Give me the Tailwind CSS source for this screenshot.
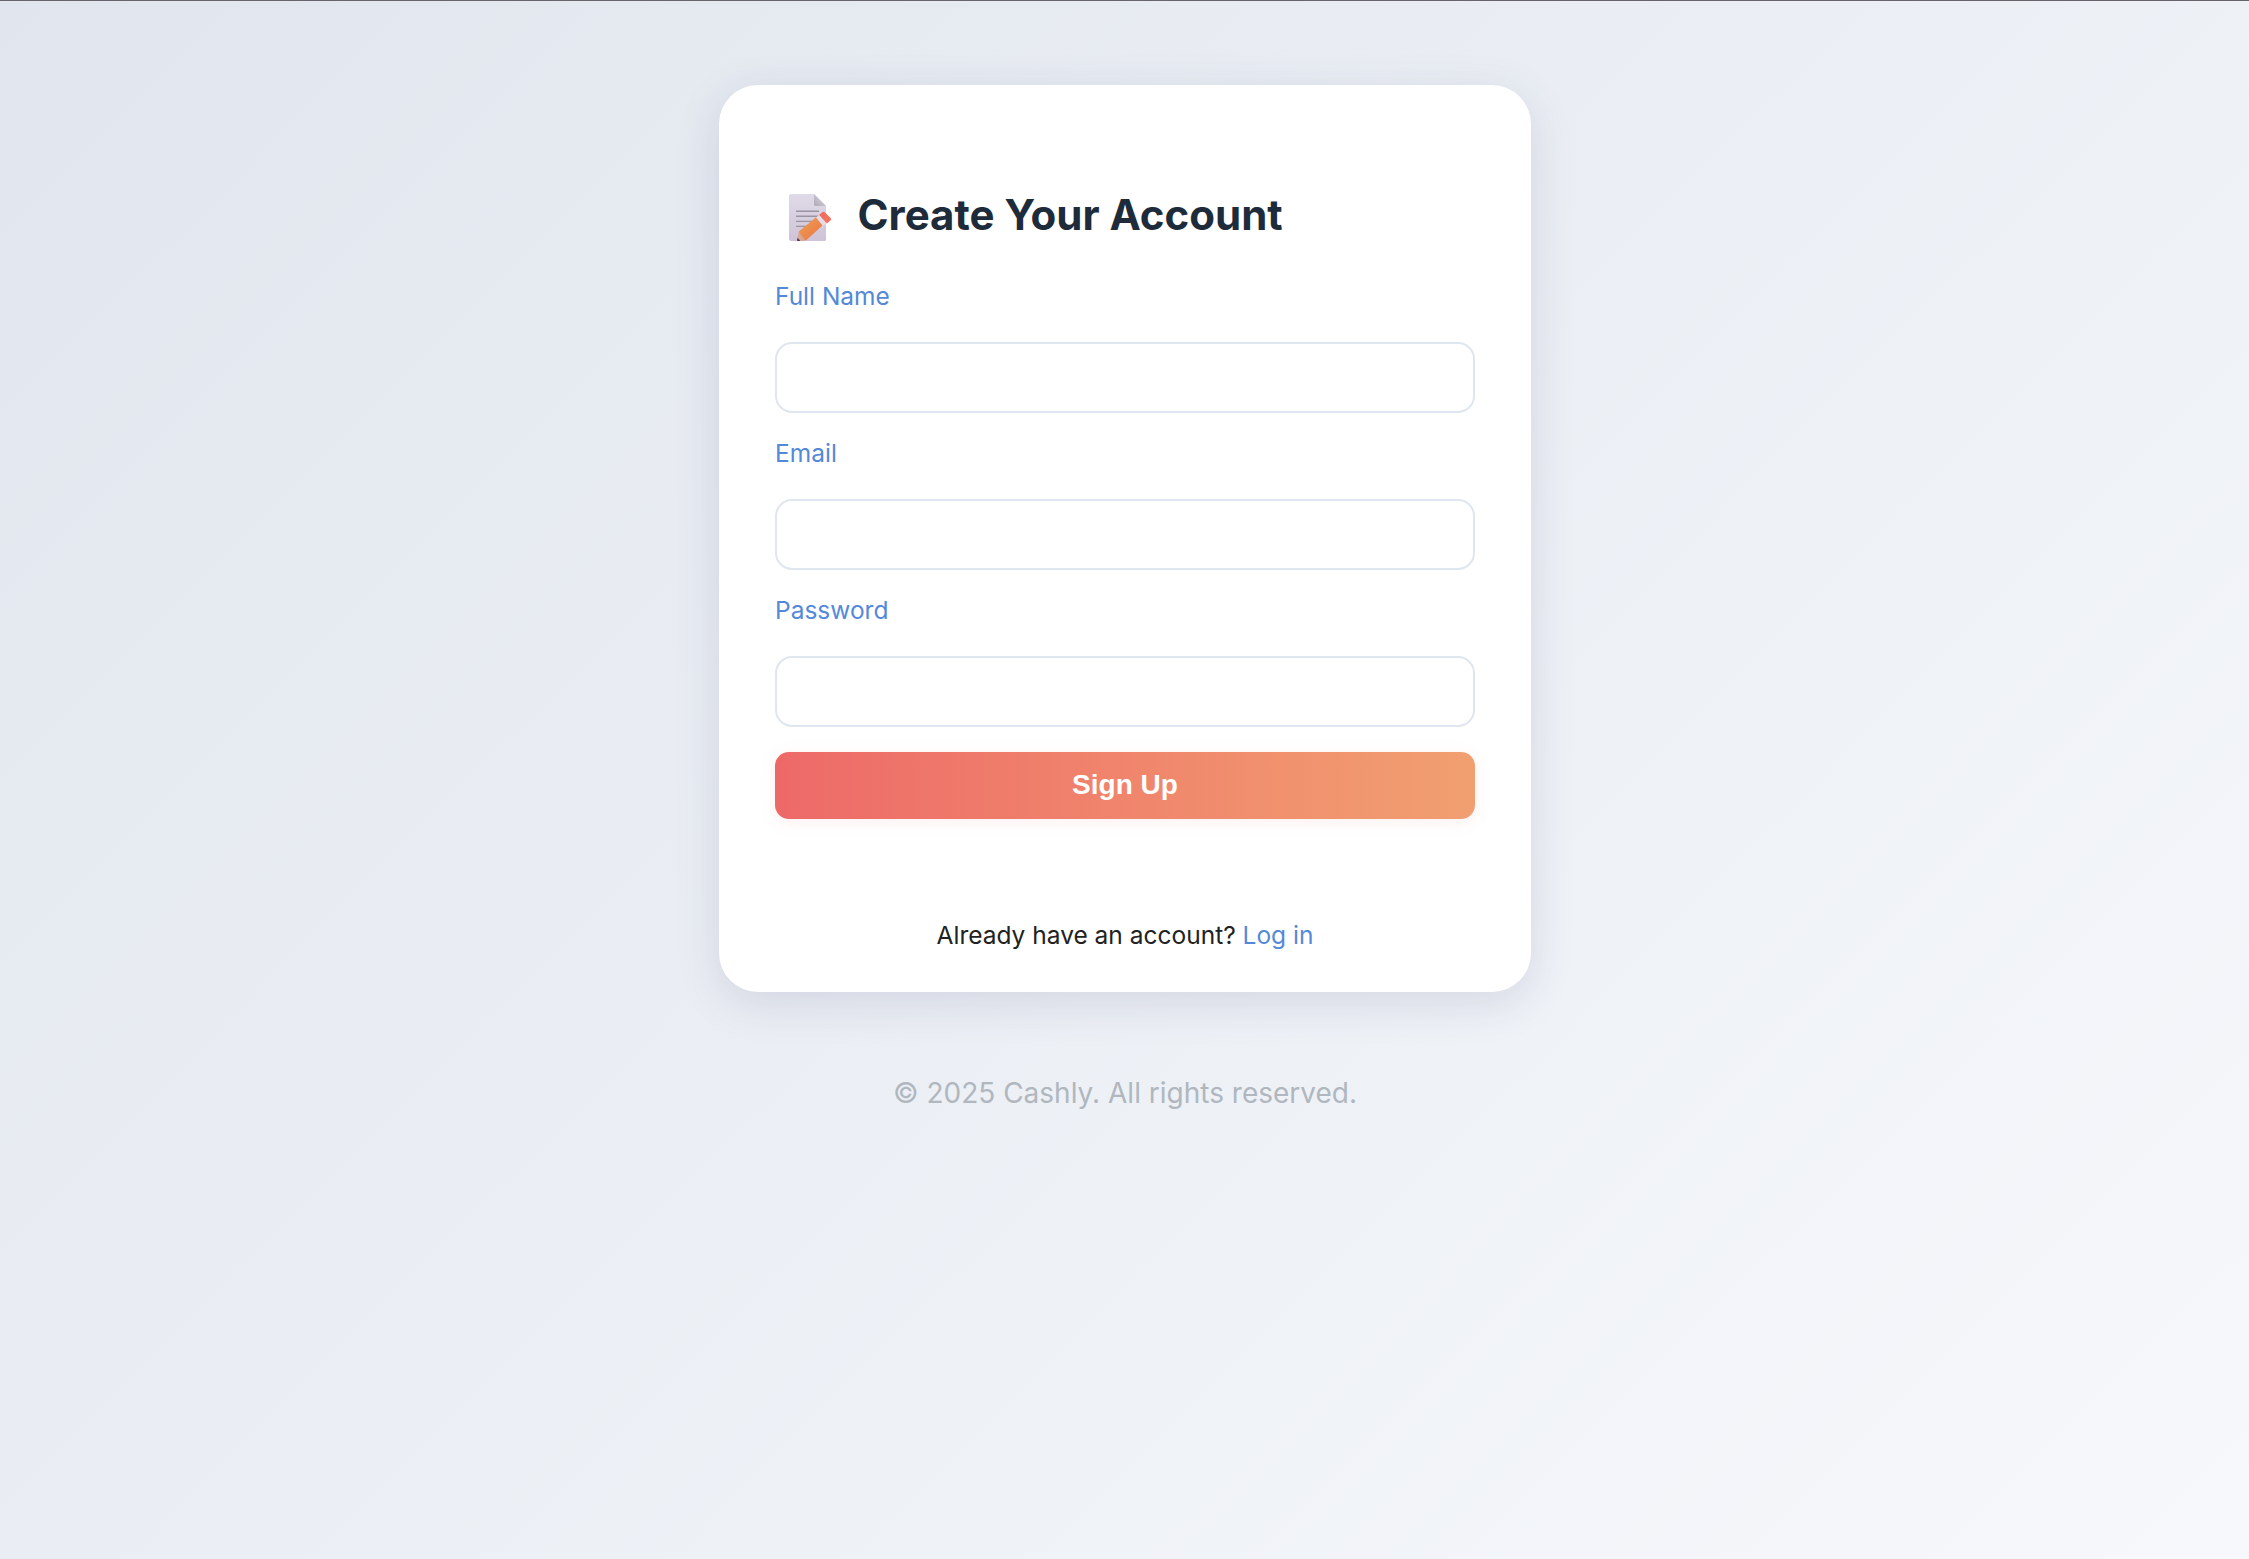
<!DOCTYPE html>
<html lang="en">
<head>
<meta charset="utf-8">
<title>Create Your Account</title>
<script src="https://cdn.jsdelivr.net/npm/@tailwindcss/browser@4"></script>
</head>
<body class="min-h-screen border-t border-[#67646b] bg-linear-135 from-[#e1e6ee] to-[#f6f8fb] font-['Inter',sans-serif]">
<div class="flex flex-col items-center pt-[84px]">
  <main class="flex h-[907px] w-[812px] flex-col rounded-[39px] bg-white px-14 pt-[100px] shadow-[0_11px_45px_rgba(44,48,100,0.13)]">
    <h1 class="flex h-[60px] items-center pl-[13px] text-[42px] leading-[60px] font-bold text-[#1d2b3a]">
      <svg class="mt-[5px] mr-[26px] h-[49px] w-[44px] shrink-0" viewBox="18 13 44 49" fill="none" aria-hidden="true">
        <defs>
          <linearGradient id="page" x1="0" y1="0" x2="0" y2="1"><stop stop-color="#e0dbe8"/><stop offset="1" stop-color="#cec3d7"/></linearGradient>
          <linearGradient id="fold" x1="0" y1="1" x2="1" y2="0"><stop stop-color="#b0a9b5"/><stop offset=".6" stop-color="#cbc5d0"/></linearGradient>
          <linearGradient id="wood" x1="0" y1="0" x2="1" y2="1"><stop stop-color="#f1a04f"/><stop offset="1" stop-color="#e77549"/></linearGradient>
          <linearGradient id="eraser" x1="0" y1="0" x2="1" y2="1"><stop stop-color="#ef6a53"/><stop offset="1" stop-color="#f37668"/></linearGradient>
        </defs>
        <path d="M21 14H44L56 26V59.500Q56 61 54.500 61H21Q19 61 19 59V16Q19 14 21 14Z" fill="url(#page)"/>
        <path d="M44 14L56 26H45.500Q44 26 44 24.500Z" fill="url(#fold)"/>
        <path d="M26 31.200H49M26 36.300H49M26 41.400H45M26 46.400H40" stroke="#9a93a0" stroke-width="1.400"/>
        <path d="M28.800 52L36 60L34 61H27.300L27.200 59Z" fill="#d9a795"/>
        <path d="M27.600 58L30 60.500V61H27.200V59Z" fill="#55364a"/>
        <path d="M28.500 51.800L46.300 37L53 45L36.500 60Q35 61 34 59Z" fill="url(#wood)"/>
        <path d="M46 37.500L49.300 34.800L57 42.500L53 46Z" fill="#e6dce9"/>
        <path d="M49.200 35L52.300 32.300Q53.700 31.300 54.900 32.500L60.600 38Q61.800 39.200 60.500 40.500L56.900 43.600Z" fill="url(#eraser)"/>
      </svg>
      <span>Create Your Account</span>
    </h1>
    <form class="mt-[33px] flex flex-col text-[24.5px] leading-9 text-[#5489d9]">
      <label for="name" class="h-9 pl-[0.5px]">Full Name</label>
      <input id="name" type="text" class="mt-7 h-[71px] rounded-[17px] border-2 border-[#e0e6ef] px-5">
      <label for="email" class="mt-[22px] h-9 pl-[0.5px]">Email</label>
      <input id="email" type="email" class="mt-7 h-[71px] rounded-[17px] border-2 border-[#e0e6ef] px-5">
      <label for="password" class="mt-[22px] h-9 pl-[0.5px]">Password</label>
      <input id="password" type="password" class="mt-7 h-[71px] rounded-[17px] border-2 border-[#e0e6ef] px-5">
      <button type="button" class="mt-[25px] h-[67px] rounded-[14px] bg-linear-to-r from-[#ed6968] to-[#f19f70] pb-0.5 pl-px font-['Liberation_Sans',sans-serif] text-[28px] font-bold text-white shadow-[0_3px_17px_rgba(237,105,104,0.10)]">Sign Up</button>
    </form>
    <p class="mt-[98px] pl-px text-center text-[24.5px] leading-9 text-[#222222]">Already have an account? <a href="#" class="text-[#5489d9]">Log in</a></p>
  </main>
  <footer class="mt-[81px] pl-px text-[28px] leading-10 text-[#b0b7bf]">© 2025 Cashly. All rights reserved.</footer>
</div>
</body>
</html>
